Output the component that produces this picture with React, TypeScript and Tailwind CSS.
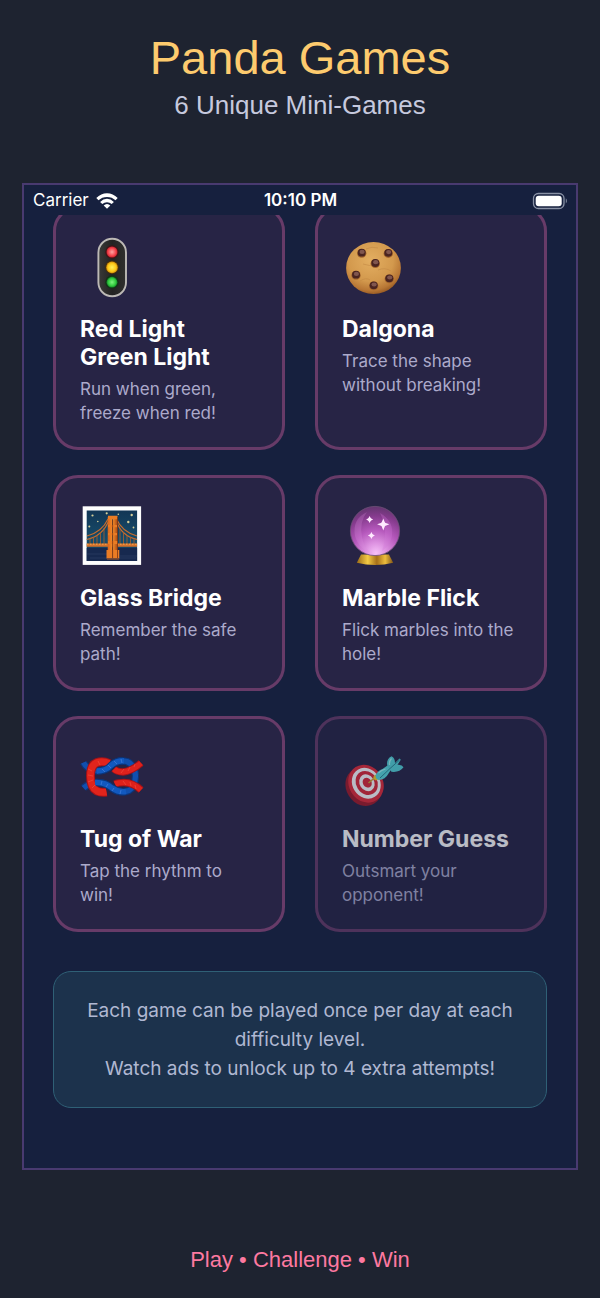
import React from 'react';

const TrafficLightIcon = () => (
  <svg viewBox="0 0 64 64" className="size-16" aria-hidden="true">
    <defs>
      <linearGradient id="tl-body" x1="0" x2="1" y1="0" y2="0">
        <stop offset="0" stopColor="#3a3a38" />
        <stop offset="0.5" stopColor="#232322" />
        <stop offset="1" stopColor="#30302e" />
      </linearGradient>
      <radialGradient id="tl-red">
        <stop offset="0" stopColor="#ffa5a2" />
        <stop offset="0.7" stopColor="#f5444c" />
        <stop offset="1" stopColor="#c9222c" />
      </radialGradient>
      <radialGradient id="tl-yellow">
        <stop offset="0" stopColor="#fff05a" />
        <stop offset="0.7" stopColor="#fdc917" />
        <stop offset="1" stopColor="#d18d0c" />
      </radialGradient>
      <radialGradient id="tl-green">
        <stop offset="0" stopColor="#7df57e" />
        <stop offset="0.7" stopColor="#2fc93c" />
        <stop offset="1" stopColor="#15852a" />
      </radialGradient>
    </defs>
    <rect x="18.4" y="3.7" width="27.6" height="57.6" rx="13.8" fill="url(#tl-body)" stroke="#bcb9b5" strokeWidth="1.9" />
    <circle cx="32" cy="17" r="6.8" fill="#3f1517" />
    <circle cx="32" cy="32.2" r="6.8" fill="#4a3208" />
    <circle cx="32" cy="47" r="6.8" fill="#123516" />
    <circle cx="32" cy="17" r="5.5" fill="url(#tl-red)" />
    <circle cx="32" cy="32.4" r="5.8" fill="url(#tl-yellow)" />
    <circle cx="32" cy="47.2" r="5.4" fill="url(#tl-green)" />
  </svg>
);

const chips = [
  [19.7, 17.7],
  [46.3, 17.9],
  [33.3, 28],
  [14, 39.7],
  [47.3, 43.3],
  [31.7, 50.3],
];

const CookieIcon = () => (
  <svg viewBox="0 0 64 64" className="size-16" aria-hidden="true">
    <defs>
      <radialGradient id="ck-base" cx="0.45" cy="0.35" r="0.68">
        <stop offset="0" stopColor="#e3ae61" />
        <stop offset="0.6" stopColor="#d3994d" />
        <stop offset="0.85" stopColor="#b87735" />
        <stop offset="1" stopColor="#90541f" />
      </radialGradient>
    </defs>
    <ellipse cx="31.5" cy="33" rx="27.4" ry="26" fill="url(#ck-base)" />
    <path d="M21 29q7 3 12 0M36 35q7-3 13 1M18 46q6-4 10-1M24 14q6-3 12-1" fill="none" stroke="#c38844" strokeWidth="1" opacity="0.6" />
    {chips.map(([x, y]) => (
      <g key={`${x}-${y}`}>
        <ellipse cx={x} cy={y + 0.6} rx="4.7" ry="4.4" fill="#a4672e" />
        <ellipse cx={x} cy={y} rx="4" ry="3.9" fill="#4a2420" />
        <ellipse cx={x + 0.4} cy={y - 0.8} rx="2.6" ry="2.1" fill="#80564e" />
      </g>
    ))}
  </svg>
);

const BridgeIcon = () => (
  <svg viewBox="0 0 64 64" className="size-16" aria-hidden="true">
    <defs>
      <linearGradient id="br-sky" x1="0" x2="0" y1="0" y2="1">
        <stop offset="0" stopColor="#123655" />
        <stop offset="0.6" stopColor="#174d6b" />
        <stop offset="1" stopColor="#123354" />
      </linearGradient>
      <linearGradient id="br-tower" x1="0" x2="1" y1="0" y2="0">
        <stop offset="0" stopColor="#d9631a" />
        <stop offset="0.5" stopColor="#f58f2c" />
        <stop offset="1" stopColor="#a94713" />
      </linearGradient>
    </defs>
    <rect x="2.7" y="2.3" width="58.4" height="58.6" fill="#fdfdfd" />
    <rect x="6.7" y="6.5" width="50.4" height="50.4" fill="url(#br-sky)" />
    <path d="M6.7 44h50.4v12.9H6.7z" fill="#17294f" />
    <path d="M7 50h20M40 52h17M10 54h46" stroke="#2c3c63" strokeWidth="0.8" />
    <g fill="#d6cf98">
      <circle cx="12.5" cy="11.5" r="1.1" />
      <circle cx="26.7" cy="9.3" r="1.1" />
      <circle cx="38.3" cy="10.3" r="0.8" />
      <circle cx="51.7" cy="11" r="1.2" />
      <circle cx="17.8" cy="17.5" r="0.8" />
      <circle cx="48.3" cy="18" r="1.2" />
      <circle cx="9.3" cy="22.4" r="1" />
      <circle cx="53.5" cy="23.5" r="0.9" />
    </g>
    <path d="M6.7 35.5Q23 32 29 16M57.1 35.5Q41 32 36 16M7 32Q22 28 28 15M57 32Q42 28 36 14" fill="none" stroke="#c86d2d" strokeWidth="1.1" />
    <path d="M10 34v7M13.5 33v8M17 31v10M20.5 28v13M24 24v17M40 24v17M43.5 28v13M47 31v10M50.5 33v8M54 34v7" stroke="#b0602c" strokeWidth="0.8" />
    <path d="M6.7 39.5h50.4v3.3H6.7z" fill="#d4722b" />
    <path d="M7 40.2h50" stroke="#ffb354" strokeWidth="0.8" strokeDasharray="1.5 1.5" />
    <path d="M27.7 13h4.6v41h-4.6zM33 13h4.6v41H33z" fill="url(#br-tower)" />
    <path d="M28 11.8h9.5v3.5H28zM28 21h9v2.2h-9zM28 29h9v2.2h-9zM28 37h10v3H28zM26.5 46h6v8.5h-6zM33 46h6.3v8.5H33z" fill="#ea7c24" />
    <path d="M37.5 13v41M32.6 16v38" stroke="#7b3312" strokeWidth="0.8" />
    <path d="M27 55h12" stroke="#7a4930" strokeWidth="1.5" />
  </svg>
);

const CrystalBallIcon = () => (
  <svg viewBox="0 0 64 64" className="size-16" aria-hidden="true">
    <defs>
      <radialGradient id="cb-ball" cx="0.52" cy="0.95" r="0.95">
        <stop offset="0" stopColor="#f6c0f8" />
        <stop offset="0.22" stopColor="#dd92e1" />
        <stop offset="0.5" stopColor="#b558bc" />
        <stop offset="0.8" stopColor="#843a8c" />
        <stop offset="1" stopColor="#63366f" />
      </radialGradient>
      <linearGradient id="cb-base" x1="0" x2="1" y1="0" y2="0">
        <stop offset="0" stopColor="#9a6a16" />
        <stop offset="0.3" stopColor="#f4cb45" />
        <stop offset="0.55" stopColor="#a66f19" />
        <stop offset="0.78" stopColor="#edbd3d" />
        <stop offset="1" stopColor="#805416" />
      </linearGradient>
    </defs>
    <path d="M19 50.5h28l4.2 8.200q-18 4.500-36.400 0z" fill="url(#cb-base)" />
    <circle cx="33" cy="27" r="24.6" fill="url(#cb-ball)" stroke="#705078" strokeWidth="0.8" />
    <path d="M13 32q-3-17 12-24-8 10-5 25t11 16q-14-3-18-17z" fill="#da91df" opacity="0.25" />
    <path d="M38 9q14 8 12 23-2 10-10 15 7-20-2-38z" fill="#cf78d8" opacity="0.3" />
    <g fill="#ffe9ff">
      <path d="M41.3 14.500l1.700 4.200 4.400 1.500-4.400 1.800-1.700 4.400-1.800-4.400-4.400-1.800 4.400-1.500z" />
      <path d="M27.600 12l1.200 2.300 2.300 1.200-2.300 1.200-1.200 2.300-1.200-2.300-2.300-1.200 2.300-1.200z" />
      <path d="M29.400 28l1.200 2.300 2.300 1.200-2.300 1.200-1.200 2.300-1.200-2.300-2.300-1.200 2.300-1.200z" />
      <circle cx="41.3" cy="20.2" r="2.2" />
      <circle cx="27.6" cy="15.5" r="1.6" />
      <circle cx="29.4" cy="31.500" r="1.500" />
    </g>
  </svg>
);

const KnotIcon = () => (
  <svg viewBox="0 0 64 64" className="size-16" aria-hidden="true">
    <g fill="none">
      <path d="M3.5 17.5Q7 25 17 26Q26 26 31 20Q38 14.5 47 16.5Q55 20 55.5 31" stroke="#0c3579" strokeWidth="7.4" />
      <path d="M3.5 43Q9 38 18 37.5Q26 38 32 43Q40 49 49 45.5Q55 42 55.5 31" stroke="#0c3579" strokeWidth="7.4" />
      <path d="M3.5 17.5Q7 25 17 26Q26 26 31 20Q38 14.5 47 16.5Q55 20 55.5 31" stroke="#104fae" strokeWidth="5.2" />
      <path d="M3.5 43Q9 38 18 37.5Q26 38 32 43Q40 49 49 45.5Q55 42 55.5 31" stroke="#104fae" strokeWidth="5.2" />
      <path d="M61 18Q52 26 43 27Q37 27 34 24" stroke="#a41218" strokeWidth="7.4" />
      <path d="M61 45Q53 37.5 44 37.5Q38 37.5 35 39" stroke="#a41218" strokeWidth="7.4" />
      <path d="M61 18Q52 26 43 27Q37 27 34 24" stroke="#de211c" strokeWidth="5.6" />
      <path d="M61 45Q53 37.5 44 37.5Q38 37.5 35 39" stroke="#de211c" strokeWidth="5.6" />
      <path d="M29 18.500Q23 15.500 17 17.500Q10.500 20 10.500 31Q10.500 42.500 17 46Q21 48 26.500 47" stroke="#a41218" strokeWidth="9" />
      <path d="M29 18.500Q23 15.500 17 17.500Q10.500 20 10.500 31Q10.500 42.500 17 46Q21 48 26.500 47" stroke="#e0241c" strokeWidth="7" />
      <path d="M18 26Q26 26 31 20.5Q36 15.8 43 15.8" stroke="#0c3579" strokeWidth="7.4" />
      <path d="M17 26Q26 26 31 20.5Q36 15.8 44 15.8" stroke="#1259bf" strokeWidth="5.4" />
      <path d="M16 37.5Q25 37 32 43Q38 47.5 45 46.5" stroke="#0c3579" strokeWidth="7.4" />
      <path d="M15 37.5Q25 37 32 43Q38 47.5 46 46.5" stroke="#1259bf" strokeWidth="5.4" />
    </g>
    <path d="M8 24l4 2M8 30l5 1M8 37l5-2M12 43l3-3M18 16l2 4M41 28l3-4M48 26l2-4M54 22l1-3M43 36l3 4M50 37l1 4M55 40l1 4" stroke="#ff6650" strokeWidth="0.8" opacity="0.5" />
    <path d="M22 24l3 3M28 20l3 3M34 16l3 3M41 14l1 4M22 36l-1 4M28 39l-2 3M34 43l-2 3M41 45l-1 4" stroke="#6a9df0" strokeWidth="0.8" opacity="0.5" />
  </svg>
);

const TargetIcon = () => (
  <svg viewBox="0 0 64 64" className="size-16" aria-hidden="true">
    <g transform="rotate(-32 23 39)">
      <ellipse cx="20.5" cy="40.5" rx="17.500" ry="20" fill="#a31a28" />
      <ellipse cx="24" cy="39.3" rx="17" ry="19.600" fill="#e32a38" />
      <ellipse cx="24.5" cy="39" rx="13.8" ry="16" fill="#fff" />
      <ellipse cx="25" cy="39" rx="10.6" ry="12.5" fill="#dc2836" />
      <ellipse cx="25.3" cy="39" rx="7.3" ry="8.8" fill="#fff" />
      <ellipse cx="25.6" cy="39" rx="4.3" ry="5.2" fill="#dc2836" />
    </g>
    <path d="M26.5 38l7-6" stroke="#d1aa36" strokeWidth="1.6" />
    <path d="M31.5 31.5l2.5-2 3.5 4-3.500 2q-3-1-2.500-4z" fill="#f7d020" />
    <path d="M33.5 30.500q2-5 7-6.500l5-3.500 4 3.500-3 4.500q-3 6-10 6.500-3-1-3-4.500z" fill="#58d9dc" />
    <path d="M45.5 21.500q-2-7 4-10.300 3.500 1.800 3.500 6.800l4.500-4.500 1.300 1.300-3.300 5q4.500-.5 6 2.500-4 5.500-12 4.500z" fill="#54d3d7" />
    <path d="M38 33l10-9.500 9.500-8.500" fill="none" stroke="#2a8592" strokeWidth="1" />
    <path d="M36.5 28q3-3 7-4M47.500 20q-.5-4 2-6.500" fill="none" stroke="#a5f2f0" strokeWidth="1.200" />
  </svg>
);

const WifiIcon = () => (
  <svg viewBox="0 0 24 18" className="h-[18px] w-6" fill="#fff" aria-label="Wi-Fi">
    <path d="M1.3 6.1Q6 1.300 12 1.300T22.700 6.100L20.500 8.300Q17 4.900 12 4.900T3.500 8.300Z" />
    <path d="M5.1 9.900Q8.200 6.700 12 6.700T18.900 9.900L16.700 12.100Q14.700 10.200 12 10.200T7.300 12.100Z" />
    <path d="M8.7 13.500Q10 12 12 12T15.300 13.500L12 16.800Z" />
  </svg>
);

const BatteryIcon = () => (
  <svg viewBox="0 0 36 18" className="h-[18px] w-9" aria-label="Battery">
    <rect x="1.5" y="1.5" width="30.5" height="15" rx="4.8" fill="none" stroke="#8991a5" strokeWidth="1.3" />
    <rect x="3.7" y="3.7" width="26" height="10.6" rx="3" fill="#fff" />
    <path d="M33.8 6.3Q36 9 33.8 11.5Z" fill="#8991a5" />
  </svg>
);

const games = [
  { title: 'Red Light Green Light', description: 'Run when green, freeze when red!', icon: TrafficLightIcon },
  { title: 'Dalgona', description: 'Trace the shape without breaking!', icon: CookieIcon },
  { title: 'Glass Bridge', description: 'Remember the safe path!', icon: BridgeIcon },
  { title: 'Marble Flick', description: 'Flick marbles into the hole!', icon: CrystalBallIcon },
  { title: 'Tug of War', description: 'Tap the rhythm to win!', icon: KnotIcon },
  { title: 'Number Guess', description: 'Outsmart your opponent!', icon: TargetIcon, locked: true },
];

const App = () => {
  return (
    <div className="min-h-screen flex flex-col bg-[#1e2330] px-[22px] font-['Liberation_Sans',sans-serif]">
      <header className="pt-7 pb-[61px] text-center">
        <h1 className="text-[47px] leading-[60px] text-[#fdcb6e]">Panda Games</h1>
        <p className="text-[26px] leading-[34px] text-[#c6c9de]">6 Unique Mini-Games</p>
      </header>

      <main className="border-2 border-[#493a70] bg-[#16203e] font-[Inter,sans-serif]">
        <div className="grid grid-cols-3 items-center h-[30px] pt-0.5 pl-[9px] pr-2 text-[17px] text-white">
          <div className="flex items-center gap-1.5">
            <span>Carrier</span>
            <WifiIcon />
          </div>
          <span className="text-center font-semibold">10:10 PM</span>
          <div className="flex justify-end">
            <BatteryIcon />
          </div>
        </div>

        <div className="overflow-hidden px-[29px] pb-[60px]">
          <div className="-mt-[9px] grid grid-cols-2 gap-x-[30px] gap-y-[25px]">
            {games.map(({ title, description, icon: Icon, locked }) => (
              <button
                key={title}
                type="button"
                disabled={locked}
                className="flex flex-col items-start rounded-[25px] border-3 border-[#673b68] bg-[#272445] px-6 pt-6 pb-[22px] text-left disabled:opacity-70"
              >
                <span className="flex h-[68px] items-center mb-3.5">
                  <Icon />
                </span>
                <span className="mb-1.5 text-[23px] leading-7 font-bold text-white">{title}</span>
                <span className="text-[17px] leading-6 text-[#acaacb]">{description}</span>
              </button>
            ))}
          </div>

          <div className="mt-[39px] rounded-[18px] border border-[#2f6076] bg-[#1c324c] px-6 py-6 text-center text-[19px] leading-[29px] text-[#b0b8d2]">
            <p>Each game can be played once per day at each difficulty level.</p>
            <p>Watch ads to unlock up to 4 extra attempts!</p>
          </div>
        </div>
      </main>

      <footer className="pt-[76px] pb-6 text-center">
        <p className="text-[22px] leading-7 text-[#fd79a0]">Play • Challenge • Win</p>
      </footer>
    </div>
  );
};

export default App;
